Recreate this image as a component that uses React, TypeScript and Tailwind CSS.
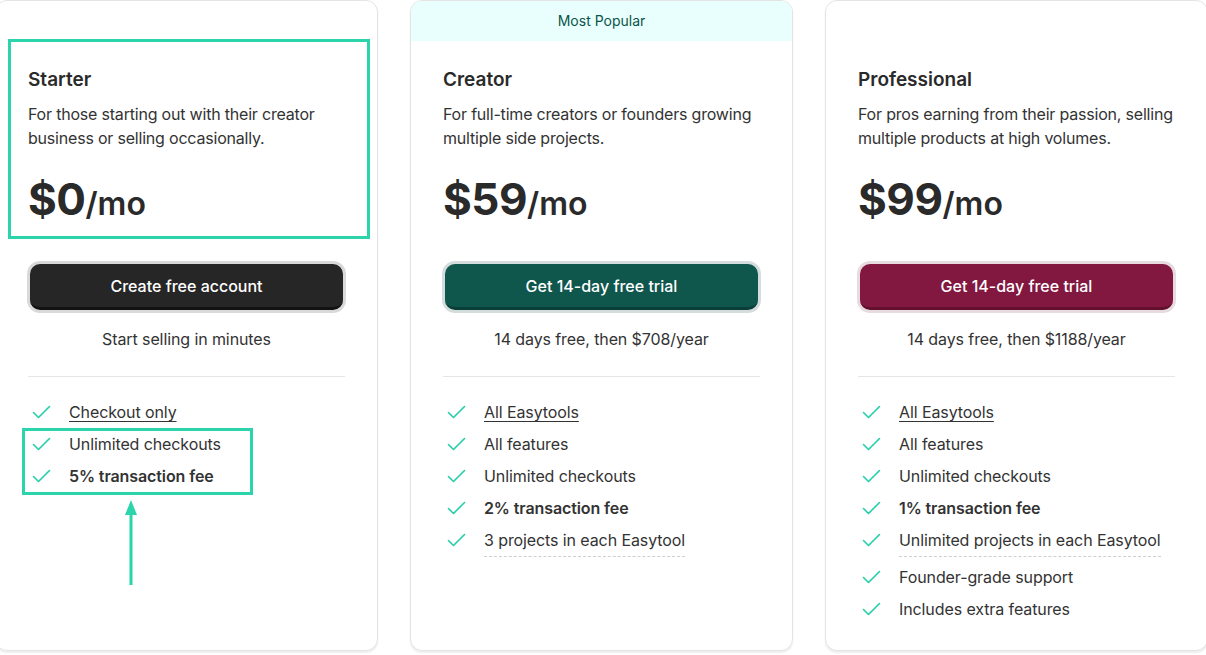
import { ReactNode } from "react"

type Feature = {
    label: string
    bold?: boolean
    link?: boolean
    dashed?: boolean
}

type Plan = {
    name: string
    description: string
    price: string
    cta: string
    note: string
    popular?: boolean
    ring: string
    button: string
    features: Feature[]
}

const plans: Plan[] = [
    {
        name: "Starter",
        description: "For those starting out with their creator business or selling occasionally.",
        price: "$0",
        cta: "Create free account",
        note: "Start selling in minutes",
        ring: "bg-[#d9d9d9]",
        button: "bg-[#262626] border-[#121212]",
        features: [
            { label: "Checkout only", link: true },
            { label: "Unlimited checkouts" },
            { label: "5% transaction fee", bold: true },
        ],
    },
    {
        name: "Creator",
        description: "For full-time creators or founders growing multiple side projects.",
        price: "$59",
        cta: "Get 14-day free trial",
        note: "14 days free, then $708/year",
        popular: true,
        ring: "bg-[#d5dddc]",
        button: "bg-[#0f564d] border-[#093f38]",
        features: [
            { label: "All Easytools", link: true },
            { label: "All features" },
            { label: "Unlimited checkouts" },
            { label: "2% transaction fee", bold: true },
            { label: "3 projects in each Easytool", dashed: true },
        ],
    },
    {
        name: "Professional",
        description: "For pros earning from their passion, selling multiple products at high volumes.",
        price: "$99",
        cta: "Get 14-day free trial",
        note: "14 days free, then $1188/year",
        ring: "bg-[#e8dbe0]",
        button: "bg-[#82173f] border-[#63102f]",
        features: [
            { label: "All Easytools", link: true },
            { label: "All features" },
            { label: "Unlimited checkouts" },
            { label: "1% transaction fee", bold: true },
            { label: "Unlimited projects in each Easytool", dashed: true },
            { label: "Founder-grade support" },
            { label: "Includes extra features" },
        ],
    },
]

function Check() {
    return (
        <svg width="19" height="14" viewBox="0 0 19 14" fill="none" className="shrink-0">
            <path d="M1.5 7.5 L6.5 12.5 L17.5 1.5" stroke="#22cfa8" strokeWidth="1.6" strokeLinecap="round" strokeLinejoin="round" />
        </svg>
    )
}

function FeatureRow({ feature }: { feature: Feature }) {
    let text: ReactNode = feature.label
    if (feature.link) text = <span className="underline underline-offset-[3px] decoration-1">{feature.label}</span>
    return (
        <li className="flex items-start gap-[18px] pl-[4px]">
            <div className="h-6 flex items-center">
                <Check />
            </div>
            <span
                className={
                    (feature.bold ? "font-semibold " : "") +
                    (feature.dashed ? "border-b border-dashed border-[#cfcfcf] pb-[4px] " : "") +
                    "leading-6 tracking-[-0.1px]"
                }
            >
                {text}
            </span>
        </li>
    )
}

function PlanCard({ plan }: { plan: Plan }) {
    return (
        <div className="w-[383px] h-[651px] shrink-0 rounded-[12px] border border-[#e4e4e4] bg-white shadow-[0_2px_2px_rgba(0,0,0,0.07)] overflow-hidden">
            <div className={"h-[40px] flex items-center justify-center text-sm " + (plan.popular ? "bg-[#e8fffd] text-[#0d5449]" : "")}>
                {plan.popular ? "Most Popular" : ""}
            </div>
            <div className="px-[32px] text-[#2f2f2f]">
                <h3 className="mt-[25px] text-[19px] leading-[28px] font-semibold text-[#2a2a2a]">{plan.name}</h3>
                <p className="mt-[8px] text-base leading-6 tracking-[-0.2px] text-[#333]">{plan.description}</p>
                <div className="mt-[27px] flex items-baseline leading-none text-[#2a2a2a]">
                    <span className="text-[44px] font-bold tracking-[-0.5px]">{plan.price}</span>
                    <span className="text-[32px] font-semibold">/mo</span>
                </div>
                <div className={"mt-[40px] rounded-[13px] p-[3px] -mx-[1px] " + plan.ring}>
                    <button className={"w-full h-[46px] rounded-[10px] border-b-[3px] text-white text-base font-medium " + plan.button}>
                        {plan.cta}
                    </button>
                </div>
                <div className="mt-[14px] text-center leading-6 tracking-[-0.1px] text-[#333]">{plan.note}</div>
                <div className="mt-[25px] h-px bg-[#e6e6e6]" />
                <ul className="mt-[23px] flex flex-col gap-2 text-[#333]">
                    {plan.features.map((f) => (
                        <FeatureRow key={f.label} feature={f} />
                    ))}
                </ul>
            </div>
        </div>
    )
}

export default function App() {
    return (
        <div className="relative w-[1206px] h-[655px] overflow-hidden bg-white" style={{ fontFamily: "Inter, 'Liberation Sans', sans-serif" }}>
            <div className="flex gap-[32px] -ml-[5px]">
                {plans.map((p) => (
                    <PlanCard key={p.name} plan={p} />
                ))}
            </div>

            {/* annotation overlay */}
            <div className="absolute left-[8px] top-[39px] w-[362px] h-[200px] border-[3px] border-[#2bd4ab]" />
            <div className="absolute left-[22px] top-[428px] w-[231px] h-[67px] border-[3px] border-[#2bd4ab]" />
            <svg className="absolute left-[120px] top-[498px]" width="22" height="90" viewBox="0 0 22 90">
                <path d="M11 2 L17 17 L5 17 Z" fill="#2bd4ab" />
                <path d="M11 14 L11 87" stroke="#2bd4ab" strokeWidth="3" />
            </svg>
        </div>
    )
}
